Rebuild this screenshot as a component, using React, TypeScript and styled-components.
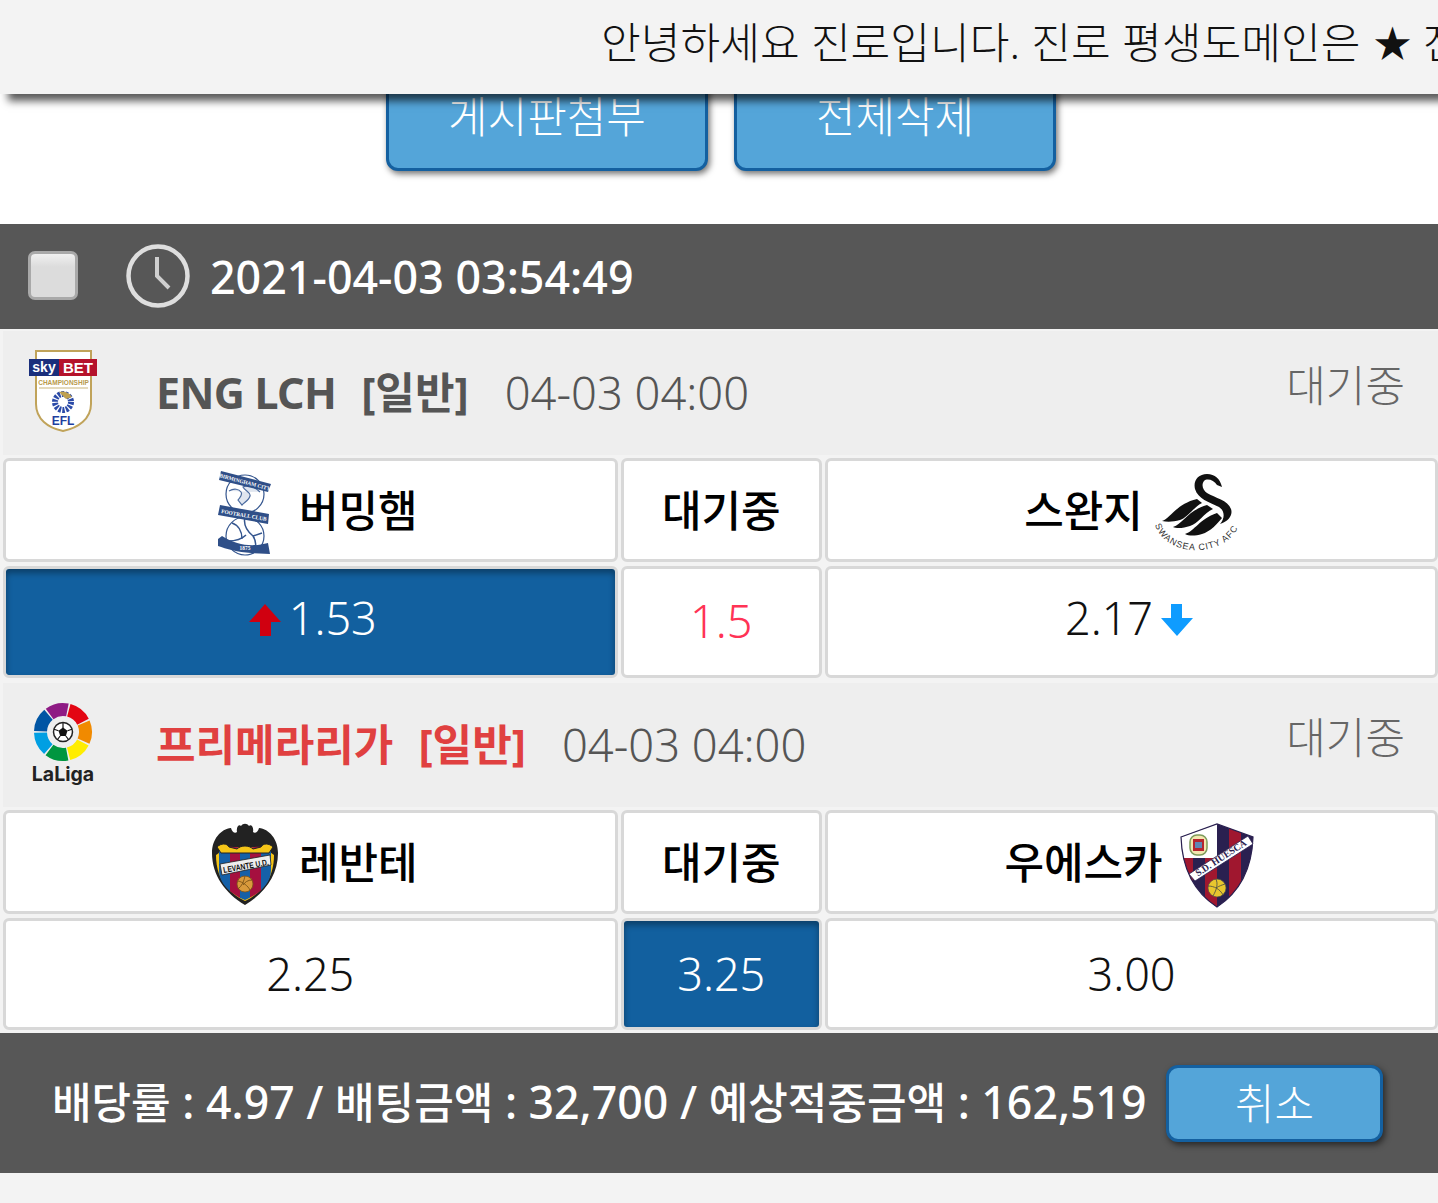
import styled, { createGlobalStyle } from "styled-components";

const GlobalStyle = createGlobalStyle`
  html, body {
    margin: 0;
    padding: 0;
    background: #f3f3f3;
  }
  body {
    font-family: "Noto Sans", "Noto Sans CJK KR", sans-serif;
    overflow: hidden;
  }
`;

const Page = styled.div`
  position: relative;
  width: 1438px;
  height: 1203px;
  overflow: hidden;
  background: #f3f3f3;
`;

const Notice = styled.div`
  position: absolute;
  top: 0;
  left: 0;
  width: 100%;
  height: 94px;
  padding: 0 0 14px 601px;
  box-sizing: border-box;
  display: flex;
  align-items: center;
  background: #f3f3f3;
  box-shadow: 8px 7px 8px rgba(0, 0, 0, 0.65);
  color: #111;
  font-size: 43.2px;
  font-weight: 300;
  white-space: pre;
  overflow: hidden;
  z-index: 2;
`;

const Star = styled.span`
  font-size: 38px;
  margin: 0 11px 0 13px;
`;

const ActionBar = styled.div`
  height: 224px;
  box-sizing: border-box;
  padding: 61px 0 0 4px;
  background: #fff;
  display: flex;
  justify-content: center;
  gap: 26px;
`;

const BlueButton = styled.button<{ $w: number; $h: number }>`
  width: ${(p) => p.$w}px;
  height: ${(p) => p.$h}px;
  box-sizing: border-box;
  border: 3px solid #1460a0;
  border-radius: 12px;
  background: #54a5d9;
  box-shadow: 2px 3px 6px rgba(0, 0, 0, 0.55);
  color: #fff;
  font-family: inherit;
  font-size: 43px;
  font-weight: 300;
  padding: 0 0 4px;
  flex: none;
`;

const Num = styled.span`
  font-size: 44.6px;
  line-height: 1;
`;

const DateBar = styled.div`
  height: 105px;
  background: #575757;
  display: flex;
  align-items: center;
  padding-left: 28px;
  color: #fff;
  font-size: 44.8px;
  font-weight: 500;
`;

const CheckBox = styled.span`
  width: 50px;
  height: 49px;
  box-sizing: border-box;
  border: 3px solid #a9a9a9;
  border-radius: 7px;
  background: linear-gradient(#f0f0f0, #dcdcdc 30%);
  margin: 0 47px 2px 0;
`;

const ClockIcon = styled.svg`
  width: 66px;
  height: 66px;
  margin: 0 19px 2px 0;
`;

const Match = styled.section<{ $top: number }>`
  margin-top: ${(p) => p.$top}px;
  display: flex;
  flex-direction: column;
`;

const LeagueHead = styled.div`
  height: 124px;
  margin-left: 3px;
  padding-bottom: 5px;
  box-sizing: border-box;
  background: #eeeeee;
  display: flex;
  align-items: center;
  font-size: 43px;
`;

const LeagueLogo = styled.div`
  width: 153px;
  flex: none;
  padding-left: 25px;
  box-sizing: border-box;
  display: flex;
  align-items: center;
`;

const LeagueName = styled.span<{ $red?: boolean }>`
  color: ${(p) => (p.$red ? "#e04040" : "#555555")};
  font-weight: 700;
`;

const LatinName = styled.span`
  letter-spacing: -0.7px;
`;

const MatchType = styled.span`
  margin-left: 25px;
`;

const KickOff = styled.span`
  margin: 4px 0 0 36px;
  color: #555555;
  font-size: 45.3px;
  font-weight: 300;
`;

const Status = styled.span`
  margin: 0 33px 15px auto;
  color: #666666;
  font-weight: 300;
`;

const Row = styled.div<{ $h: number; $top: number }>`
  margin-top: ${(p) => p.$top}px;
  height: ${(p) => p.$h}px;
  padding-left: 3px;
  display: grid;
  grid-template-columns: 614.5px 200.5px 613px;
  gap: 3.5px;
`;

const Cell = styled.div<{ $on?: boolean }>`
  box-sizing: border-box;
  border: 3px solid #d8d8d8;
  border-radius: 6px;
  padding-bottom: 2px;
  background: ${(p) => (p.$on ? "#12609f" : "#fff")};
  box-shadow: ${(p) => (p.$on ? "inset 0 4px 6px rgba(0, 0, 0, 0.35)" : "none")};
  color: ${(p) => (p.$on ? "#fff" : "#111")};
  display: flex;
  align-items: center;
  justify-content: center;
  font-size: 45px;
  font-weight: 300;
`;

const ArrowCell = styled(Cell)`
  padding-bottom: 9px;
`;

const TeamCell = styled(Cell)`
  gap: 16px;
  padding-bottom: 0;
  color: #000;
  font-size: 43px;
  font-weight: 500;
`;

const TeamName = styled.span`
  margin-bottom: 3px;
`;

const Logo = styled.svg`
  width: 80px;
  height: 84px;
  flex: none;
  margin-top: 6px;
  overflow: visible;
`;

const Handicap = styled.span`
  color: #ff3355;
  margin-bottom: 2px;
`;

const UpMark = styled.svg`
  width: 34px;
  height: 34px;
  margin: 4px 7px 0 4px;
`;

const DownMark = styled.svg`
  width: 34px;
  height: 34px;
  margin: 4px 4px 0 7px;
`;

const Summary = styled.div`
  margin-top: 3px;
  height: 140px;
  box-sizing: border-box;
  padding: 0 55px 0 52px;
  background: #575757;
  display: flex;
  align-items: center;
  justify-content: space-between;
  color: #fff;
  font-size: 43px;
  font-weight: 500;
  white-space: pre;
`;

const SummaryText = styled.span`
  margin-bottom: 5px;
`;

function EflLogo() {
  return (
    <svg width="70" height="84" viewBox="0 0 70 84">
      <path d="M8 2H63V55C63 70 50 79 35 82C20 79 8 70 8 55Z" fill="#fff" stroke="#c0a35a" strokeWidth="2" />
      <rect x="1" y="10" width="30" height="17" fill="#1a2f7c" />
      <rect x="31" y="10" width="38" height="17" fill="#b5122b" />
      <text x="16" y="23" fill="#fff" fontSize="14" fontWeight="700" textAnchor="middle" fontFamily="Liberation Sans">sky</text>
      <text x="50" y="24" fill="#fff" fontSize="15" fontWeight="700" textAnchor="middle" fontFamily="Liberation Sans">BET</text>
      <text x="35.5" y="36" fill="#b89a4c" fontSize="6.5" fontWeight="700" textAnchor="middle" fontFamily="Liberation Sans">CHAMPIONSHIP</text>
      <rect x="11" y="38.5" width="49" height="1" fill="#c9b67c" />
      <circle cx="35" cy="53" r="8" fill="none" stroke="#2b4aa8" strokeWidth="6" strokeDasharray="2.4 1.2" />
      <path d="M31 43a11 11 0 0 1 13 5l-6 2z" fill="#bfa050" />
      <text x="35" y="76" fill="#1f3fa0" fontSize="12" fontWeight="700" textAnchor="middle" fontFamily="Liberation Sans">EFL</text>
    </svg>
  );
}

function LaLigaLogo() {
  const colors = ["#e30613", "#f18a00", "#ffed00", "#009640", "#009fe3", "#0055a4", "#8e1a84"];
  return (
    <svg width="70" height="84" viewBox="-4 0 70 84">
      {colors.map((c, i) => (
        <circle
          key={c}
          cx="31"
          cy="31"
          r="22.5"
          fill="none"
          stroke={c}
          strokeWidth="13"
          strokeDasharray="18.6 122.8"
          transform={`rotate(${-75 + i * (360 / 7)} 31 31)`}
        />
      ))}
      <circle cx="31" cy="31" r="9.5" fill="#fff" stroke="#222" strokeWidth="1.5" />
      <path d="M31 26.5l4.5 3.2-1.7 5.3h-5.6L26.500 29.700Z" fill="#111" />
      <path d="M31 22v5M35.500 29.700l4.500-1.500M33.800 35l2.700 3.500M28.200 35l-2.700 3.500M26.500 29.700l-4.500-1.500" stroke="#111" strokeWidth="1.2" />
      <text x="31" y="80" fill="#222" fontSize="19.500" fontWeight="700" textAnchor="middle" fontFamily="Inter">LaLiga</text>
    </svg>
  );
}

function BirminghamLogo() {
  return (
    <Logo viewBox="-15 0 80 84">
      <circle cx="27" cy="23" r="19" fill="#fff" stroke="#35568f" strokeWidth="1.2" />
      <path d="M11 20c5-3 10-2 12 1s-1 5-3 8l4 5c3-3 7-5 8-9s-5-5-7-9c5-3 12 0 17 5" fill="#dfe5ef" stroke="#4a6a9e" strokeWidth="1.2" />
      <circle cx="27" cy="65" r="19" fill="#fff" stroke="#35568f" strokeWidth="1.2" />
      <path d="M27 46c-2 8 2 14 8 19M14 52c6 2 10 8 10 16M10 70c8 0 14-2 18-6M35 65c4 6 3 12 0 17M44 62c-3 1-6 2-9 3" fill="none" stroke="#35568f" strokeWidth="1.5" />
      <path d="M3 0L53 13L50 21L1 9Z" fill="#2f4f88" />
      <text x="27" y="13" fill="#fff" fontSize="5.4" fontWeight="700" textAnchor="middle" fontFamily="Liberation Serif" transform="rotate(15 27 11)">BIRMINGHAM CITY</text>
      <path d="M2 34L51 43L50 53L0 44Z" fill="#2f4f88" />
      <text x="26" y="46" fill="#fff" fontSize="5.4" fontWeight="700" textAnchor="middle" fontFamily="Liberation Serif" transform="rotate(10 26 44)">FOOTBALL CLUB</text>
      <path d="M0 68L4 65C20 75 35 76 50 72L52 83L33 82C20 81 8 78 0 75Z" fill="#2f4f88" />
      <text x="27" y="79" fill="#fff" fontSize="5.4" fontWeight="700" textAnchor="middle" fontFamily="Liberation Serif">1875</text>
    </Logo>
  );
}

function SwanseaLogo() {
  return (
    <Logo viewBox="2 0 80 84">
      <path d="M65 16C63 8 58 3 50 3C41 3 36 10 38 18C41 28 52 31 62 36C68 40 68 47 63 53C72 50 76 44 74 38C71 29 58 27 50 22C46 19 44 14 47 10C50 7 57 9 60 14Z" fill="#111" />
      <path d="M5 50C14 47 19 33 40 28L45 32C37 36 30 47 23 49C16 51 10 51 5 50Z" fill="#111" />
      <path d="M16 56C26 53 30 40 50 34L56 38C47 42 41 53 33 55C27 57 20 58 16 56Z" fill="#111" />
      <path d="M28 63C38 60 42 48 60 42L65 47C61 52 53 61 45 63C38 65 32 65 28 63Z" fill="#111" />
      <path id="swanArc" d="M-2 54C10 88 70 88 83 52" fill="none" />
      <text fill="#333" fontSize="9" fontFamily="Liberation Sans" letterSpacing="0.9">
        <textPath href="#swanArc">SWANSEA CITY AFC</textPath>
      </text>
    </Logo>
  );
}

function LevanteLogo() {
  return (
    <Logo viewBox="-8 0 80 84">
      <defs>
        <clipPath id="levClip">
          <path d="M8 27C14 22 24 24 34 25C44 24 54 22 60 27V47C60 62 46 72 34 77C22 72 8 62 8 47Z" />
        </clipPath>
      </defs>
      <path d="M1 30C1 16 10 6 20 5C21 9 24 11 26 9C25 4 28 1 30 3C32 0 36 0 38 3C40 1 43 4 42 9C44 11 47 9 48 5C58 6 67 16 67 30C67 52 54 70 34 82C14 70 1 52 1 30Z" fill="#222" />
      <path d="M5 32C5 60 22 72 34 78C46 72 63 60 63 32C52 24 44 24 34 24C24 24 16 24 5 32Z" fill="#f5c518" />
      <g clipPath="url(#levClip)">
        <rect x="8" y="20" width="11" height="60" fill="#1560a8" />
        <rect x="19" y="20" width="10" height="60" fill="#a5103f" />
        <rect x="29" y="20" width="10" height="60" fill="#1560a8" />
        <rect x="39" y="20" width="11" height="60" fill="#a5103f" />
        <rect x="50" y="20" width="11" height="60" fill="#1560a8" />
      </g>
      <path d="M6 24C10 20 16 20 18 24L26 26C30 22 38 22 42 26L50 24C52 20 58 20 62 24L58 30L10 30Z" fill="#f5c518" stroke="#222" strokeWidth="1" />
      <path d="M9 41L59 32L60 42L11 52Z" fill="#eee" stroke="#222" strokeWidth="0.8" />
      <text x="35" y="46" fill="#111" fontSize="8.5" fontWeight="700" textAnchor="middle" fontFamily="Liberation Sans" transform="rotate(-10 35 43)" textLength="46" lengthAdjust="spacingAndGlyphs">LEVANTE U.D.</text>
      <circle cx="34" cy="61" r="8" fill="#d99a3c" stroke="#7a5216" strokeWidth="0.8" />
      <path d="M27 58c5 1 10 5 12 9M34 53c-1 5-3 10-7 13M41 57c-4 0-7 2-9 5" fill="none" stroke="#7a5216" strokeWidth="0.9" />
    </Logo>
  );
}

function HuescaLogo() {
  return (
    <Logo viewBox="-1 -1 80 84">
      <defs>
        <clipPath id="hueClip">
          <path d="M1 13L37 0L73 13C72 44 60 68 37 83C14 68 2 44 1 13Z" />
        </clipPath>
      </defs>
      <g clipPath="url(#hueClip)">
        <rect x="0" y="0" width="75" height="84" fill="#2a2050" />
        <rect x="0" y="0" width="37" height="34" fill="#fff" />
        <rect x="1" y="34" width="12" height="50" fill="#a0172f" />
        <rect x="25" y="34" width="12" height="50" fill="#a0172f" />
        <rect x="49" y="0" width="12" height="84" fill="#a0172f" />
      </g>
      <path d="M1 13L37 0L73 13C72 44 60 68 37 83C14 68 2 44 1 13Z" fill="none" stroke="#2a2050" strokeWidth="1.2" />
      <rect x="10" y="11" width="17" height="20" rx="7" fill="#f3e6b0" stroke="#7d9a5a" strokeWidth="1.5" />
      <rect x="13" y="15" width="11" height="12" fill="#b5242f" />
      <rect x="15" y="18" width="7" height="6" fill="#5e86b5" />
      <path d="M9 50L68 12L73 20L15 57Z" fill="#fff" stroke="#2a2050" strokeWidth="0.8" />
      <text x="41" y="37" fill="#2a2050" fontSize="9.5" fontWeight="700" textAnchor="middle" fontFamily="Liberation Serif" transform="rotate(-33 41 34)">S.D. HUESCA</text>
      <circle cx="37" cy="64" r="9" fill="#e8c72e" stroke="#554" strokeWidth="0.7" />
      <path d="M28 62c6 0 12 3 15 9M36 55c2 5 1 10-3 17M45 60c-3 1-6 2-9 4" fill="none" stroke="#554" strokeWidth="0.9" />
    </Logo>
  );
}

const UpArrow = (
  <UpMark viewBox="0 0 34 34">
    <path d="M17 1L33 19H23V33H12V19H1Z" fill="#d00010" />
  </UpMark>
);

const DownArrow = (
  <DownMark viewBox="0 0 34 34">
    <path d="M11 1H22V15H33L17 33L1 15H11Z" fill="#0f9cff" />
  </DownMark>
);

export default function App() {
  return (
    <Page>
      <GlobalStyle />
      <Notice>
        안녕하세요 진로입니다. 진로 평생도메인은
        <Star>★</Star>
        진로닷컴
      </Notice>
      <ActionBar>
        <BlueButton $w={322} $h={110}>게시판첨부</BlueButton>
        <BlueButton $w={322} $h={110}>전체삭제</BlueButton>
      </ActionBar>
      <DateBar>
        <CheckBox />
        <ClockIcon viewBox="0 0 66 66">
          <circle cx="33" cy="33" r="29.5" fill="none" stroke="#dedede" strokeWidth="4.5" />
          <path d="M32 14V33L44 45" fill="none" stroke="#cfcfcf" strokeWidth="4" />
        </ClockIcon>
        2021-04-03 03:54:49
      </DateBar>

      <Match $top={2}>
        <LeagueHead>
          <LeagueLogo><EflLogo /></LeagueLogo>
          <LeagueName>
            <LatinName>ENG LCH</LatinName>
            <MatchType>[일반]</MatchType>
          </LeagueName>
          <KickOff>04-03 04:00</KickOff>
          <Status>대기중</Status>
        </LeagueHead>
        <Row $h={104} $top={3}>
          <TeamCell><BirminghamLogo /><TeamName>버밍햄</TeamName></TeamCell>
          <TeamCell><TeamName>대기중</TeamName></TeamCell>
          <TeamCell><TeamName>스완지</TeamName><SwanseaLogo /></TeamCell>
        </Row>
        <Row $h={112} $top={4}>
          <ArrowCell $on>{UpArrow}1.53</ArrowCell>
          <Cell><Handicap>1.5</Handicap></Cell>
          <ArrowCell>2.17{DownArrow}</ArrowCell>
        </Row>
      </Match>

      <Match $top={5}>
        <LeagueHead>
          <LeagueLogo><LaLigaLogo /></LeagueLogo>
          <LeagueName $red>
            프리메라리가
            <MatchType>[일반]</MatchType>
          </LeagueName>
          <KickOff>04-03 04:00</KickOff>
          <Status>대기중</Status>
        </LeagueHead>
        <Row $h={104} $top={3}>
          <TeamCell><LevanteLogo /><TeamName>레반테</TeamName></TeamCell>
          <TeamCell><TeamName>대기중</TeamName></TeamCell>
          <TeamCell><TeamName>우에스카</TeamName><HuescaLogo /></TeamCell>
        </Row>
        <Row $h={112} $top={4}>
          <Cell>2.25</Cell>
          <Cell $on>3.25</Cell>
          <Cell>3.00</Cell>
        </Row>
      </Match>

      <Summary>
        <SummaryText>
          배당률<Num> : 4.97 / </Num>배팅금액<Num> : 32,700 / </Num>예상적중금액<Num> : 162,519</Num>
        </SummaryText>
        <BlueButton $w={217} $h={77}>취소</BlueButton>
      </Summary>
    </Page>
  );
}
